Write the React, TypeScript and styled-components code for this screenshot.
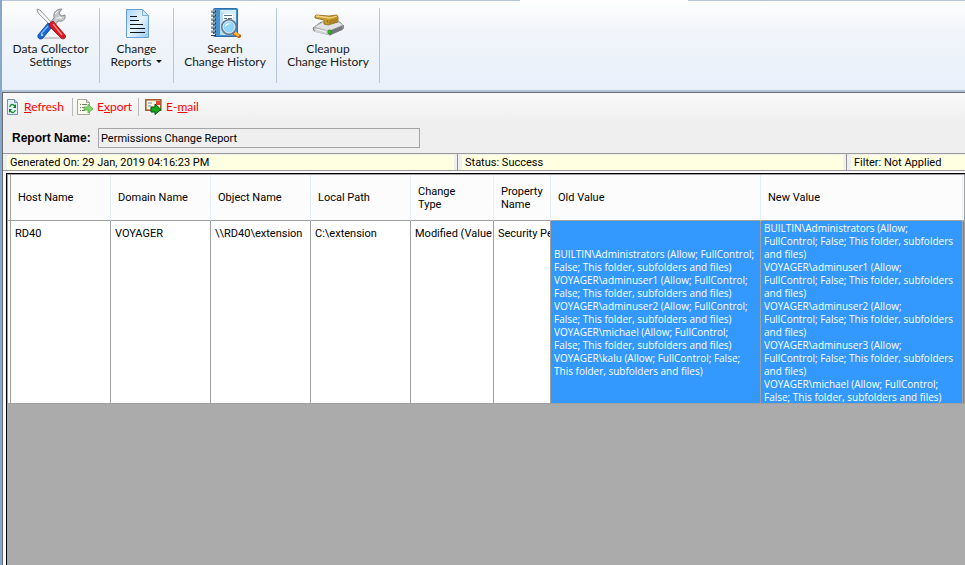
import React from "react";
import styled, { createGlobalStyle } from "styled-components";

const GlobalStyle = createGlobalStyle`
  * { box-sizing: border-box; }
  body {
    margin: 0;
    background: #ababab;
    color: #000;
    font: 11px/13px Roboto, "Liberation Sans", sans-serif;
    overflow: hidden;
  }
  button { font: inherit; color: inherit; border: 0; padding: 0; background: none; cursor: pointer; }
`;

const Window = styled.div`
  display: flex;
  flex-direction: column;
  min-height: 100vh;
  border-left: 2px solid #86a8cc;
`;

const TabEdge = styled.div`
  display: flex;
  height: 1px;
  background: #b6c6dc;
`;

const TabGap = styled.div`
  width: 168px;
  margin-left: 518px;
  background: #fdfdfe;
`;

const Ribbon = styled.nav`
  display: flex;
  height: 91px;
  padding: 7px 0;
  background: linear-gradient(#fefefe, #f1f5fa 35%, #e9f0fa);
  border-bottom: 2px solid #b3c4da;
`;

const RibbonButton = styled.button<{ $width: number }>`
  display: flex;
  flex: none;
  flex-direction: column;
  align-items: center;
  justify-content: flex-start;
  width: ${(p) => p.$width}px;
  border-right: 1px solid #b4c5dc;
  color: #1a1a1a;
  font: 12px/13px Lato, "Open Sans", sans-serif;
  white-space: pre-line;

  svg { display: block; }
`;

const Arrow = styled.span`
  display: inline-block;
  margin: 0 0 3px 5px;
  border: 3px solid transparent;
  border-top-color: #111;
  border-bottom: 0;
`;

const Panel = styled.main`
  display: flex;
  flex: 1;
  flex-direction: column;
  background: #efefef;
  border: solid #6b6b6b;
  border-width: 1px 0 0 1px;
`;

const Toolbar = styled.div`
  display: flex;
  align-items: center;
  height: 28px;
  padding-left: 3px;
  background: linear-gradient(#fafafa, #efefef);
`;

const ToolButton = styled.button<{ $width: number }>`
  display: flex;
  flex: none;
  align-items: center;
  gap: 4px;
  width: ${(p) => p.$width}px;
  color: #f00;
  font: 12px/16px Lato, "Open Sans", sans-serif;
  white-space: nowrap;

  svg { flex: none; }
  u { text-underline-offset: 1px; }
`;

const Divider = styled.span`
  width: 1px;
  height: 18px;
  margin-right: 4px;
  background: #b9b9b9;
`;

const ReportRow = styled.div`
  display: flex;
  align-items: center;
  gap: 8px;
  height: 32px;
  padding: 2px 0 0 9px;
`;

const ReportLabel = styled.label`
  flex: none;
  width: 78px;
  font: bold 12px/14px "Liberation Sans", Arial, sans-serif;
  white-space: nowrap;
`;

const ReportInput = styled.input`
  width: 322px;
  height: 20px;
  padding: 0 2px;
  border: 1px solid #a5a5a5;
  border-radius: 0;
  background: #efefef;
  color: #000;
  font: inherit;
`;

const StatusBar = styled.div`
  display: flex;
  height: 18px;
  border: solid #9a9a9a;
  border-width: 1px 0;
  background: #efefef;
`;

const StatusCell = styled.div<{ $width?: number }>`
  flex: ${(p) => (p.$width ? "none" : "1")};
  ${(p) => (p.$width ? `width: ${p.$width}px; border-right: 1px solid #8f8f8f;` : "")}
  padding: 1px ${(p) => (p.$width ? 3 : 0)}px 0 4px;
  white-space: nowrap;

  & > span { display: block; height: 15px; padding: 1px 3px; background: #ffffe1; }
`;

const GridArea = styled.section`
  display: flex;
  flex: 1;
  padding: 2px 0 0 3px;
  background: #fbfbfb;
`;

const GridFrame = styled.div`
  flex: 1;
  min-width: 0;
  border: solid #000;
  border-width: 1px 0 0 1px;
  background: #ababab;
`;

const Table = styled.table`
  width: 100%;
  table-layout: fixed;
  border-collapse: separate;
  border-spacing: 0;
  border-top: 1px solid #a0a0a0;
  border-left: 1px solid #a0a0a0;
`;

const HeadCell = styled.th<{ $stub?: boolean }>`
  height: 46px;
  padding: ${(p) => (p.$stub ? 0 : "0 2px 0 7px")};
  border-right: 1px solid ${(p) => (p.$stub ? "#a0a0a0" : "#e3edf9")};
  border-bottom: 1px solid #a0a0a0;
  background: #fcfcfc;
  font-weight: normal;
  text-align: left;
  vertical-align: middle;
  white-space: pre-line;
`;

const Cell = styled.td<{ $selected?: boolean; $middle?: boolean }>`
  height: 183px;
  padding: ${(p) => (p.$selected ? "0 0 0 3px" : "6px 0 0 4px")};
  border-right: 1px solid #a0a0a0;
  border-bottom: 1px solid #a0a0a0;
  background: ${(p) => (p.$selected ? "#3399ff" : "#fff")};
  color: ${(p) => (p.$selected ? "#fff" : "#000")};
  vertical-align: ${(p) => (p.$middle ? "middle" : "top")};
  overflow: hidden;
  white-space: nowrap;
`;

const Lines = styled.div`
  max-height: 182px;
  padding-top: 1px;
  overflow: hidden;
  font: 10px/13px "Open Sans", "Liberation Sans", sans-serif;
  white-space: pre;
`;

const ToolsIcon = () => (
  <svg width="32" height="34" viewBox="0 0 32 34" aria-hidden="true">
    <ellipse cx="17" cy="30" rx="11" ry="1" fill="#c6c8ca" />
    <path d="M2 1l3 1 13 14-2 2L3 5z" fill="#eee" stroke="#85898d" strokeWidth=".8" />
    <path d="M4 3l12 13" stroke="#fff" />
    <path d="M14 16l5-6c-1-5 2-9 8-9l-3 4 2 3 4-1c1 5-3 7-7 6l-5 7z" fill="#c4c8cc" stroke="#7d8389" strokeWidth=".9" />
    <path d="M20 6l3-3M21 10l5 0M24 9l3 1" stroke="#f8f8f8" />
    <path d="M13 15l4 4-9 11c-2 2-6 1-5-3z" fill="#1768d5" stroke="#0b3d94" strokeWidth=".8" />
    <path d="M13 18L6 26" stroke="#79b6ff" strokeWidth="1.5" />
    <path d="M14 16l4-3 12 14c2 3-2 5-4 3L15 19z" fill="#d81b22" stroke="#8e0b14" strokeWidth=".8" />
    <path d="M18 16l9 11" stroke="#ff8985" strokeWidth="1.4" />
    <circle cx="7" cy="27" r="1" fill="#d9eaff" />
  </svg>
);

const DocumentIcon = () => (
  <svg width="32" height="34" viewBox="0 0 32 34" aria-hidden="true">
    <defs>
      <linearGradient id="sheet" x2="1" y2="1">
        <stop stopColor="#a9d4fa" /><stop offset=".5" stopColor="#e8f5ff" /><stop offset="1" stopColor="#99c8f4" />
      </linearGradient>
    </defs>
    <path d="M5.500 1.500h16l6 6v22h-22z" fill="url(#sheet)" stroke="#68a1d9" />
    <path d="M21.500 1.500v6h6z" fill="#d3e9fb" stroke="#68a1d9" strokeWidth=".8" />
    <path d="M9 8.500h7M9 12.500h9M9 16.500h13M9 20.500h15M9 24.500h15" stroke="#10151b" />
  </svg>
);

const BookIcon = () => (
  <svg width="32" height="34" viewBox="0 0 32 34" aria-hidden="true">
    <rect x="4.500" y=".5" width="24" height="28" rx="1" fill="#4792cb" stroke="#2c6daa" />
    <path d="M11 2h16v25H11z" fill="#b9dbf3" />
    <path d="M11 2h16v12z" fill="#d8edfb" />
    <path d="M14 6h10v10H14z" fill="#fff" />
    <path d="M15 7.500h8M15 10.500h3m1 0h4M15 13.500h7" stroke="#587185" />
    <path d="M2 3.500h5M2 7.500h5M2 11.500h5M2 15.500h5M2 19.500h5M2 23.500h5M2 27h5" stroke="#303d48" strokeWidth="2" />
    <path d="M2 3h4M2 7h4M2 11h4M2 15h4M2 19h4M2 23h4M2 26.500h4" stroke="#e8edf0" />
    <path d="M25 25l5 3" stroke="#b75a13" strokeWidth="4" strokeLinecap="round" />
    <path d="M26 25l3 2" stroke="#ffb33f" strokeWidth="3" strokeLinecap="round" />
    <circle cx="20" cy="19" r="7" fill="#91d5fa" stroke="#61788b" strokeWidth="2" />
    <circle cx="20" cy="19" r="6" fill="none" stroke="#e2f5ff" />
    <path d="M16 19c0-3 3-5 6-3-3 0-4 1-6 3" fill="#effbff" />
  </svg>
);

const CleanupIcon = () => (
  <svg width="32" height="34" viewBox="0 0 32 34" aria-hidden="true">
    <path d="M1 20l8-6h19l4 4-1 3-13 6-16-4z" fill="#929498" stroke="#6f7175" strokeWidth=".8" />
    <path d="M2 19l9-5h16l4 3-14 6z" fill="#e0e2e4" stroke="#b3b5b9" strokeWidth=".8" />
    <path d="M2 20l15 3v4L3 24z" fill="#d0d2d4" />
    <path d="M17 23l13-5v4l-13 5z" fill="#74777c" />
    <path d="M4 21l10 3" stroke="#f5f5f5" />
    <rect x="16" y="22" width="3" height="4" rx="1" fill="#35c51f" stroke="#167514" strokeWidth=".7" />
    <path d="M3 8l1-1 13 1 8-1 1 2v5l-10 3-4-1v-4L3 10z" fill="#c89b31" stroke="#8b6417" strokeWidth=".8" />
    <path d="M4 8l14 2 7-2" stroke="#f3d682" strokeWidth="1.3" fill="none" />
    <path d="M15 12l1 3m2-3v4m2-5v4m2-4v4m2-5v4" stroke="#8b6415" strokeWidth=".8" fill="none" />
  </svg>
);

const RefreshIcon = () => (
  <svg width="14" height="18" viewBox="0 0 14 18" aria-hidden="true">
    <path d="M1.500 1.500h7l3 3v12h-10z" fill="#e4effb" stroke="#7790b1" />
    <path d="M8.500 1.500v3h3" fill="#b7cce8" stroke="#7790b1" />
    <path d="M4 9V8q2-3 5 0M9 12v1q-2 3-5 0" fill="none" stroke="#168a22" strokeWidth="1.300" />
    <path d="M10 6v4H7zM3 15v-4h3z" fill="#087c15" />
  </svg>
);

const ExportIcon = () => (
  <svg width="16" height="18" viewBox="0 0 16 18" aria-hidden="true">
    <path d="M.5 1.500h9l3 3v12H.5z" fill="#fbfbed" stroke="#a8a799" />
    <path d="M9.500 1.500v3h3" fill="#e0dfcf" stroke="#a8a799" />
    <path d="M3 6.500h1m1 0h5M3 9.500h1m1 0h3M3 12.500h1m1 0h3" stroke="#71796c" />
    <path d="M7 9h4V6l5 5-5 4v-3H7z" fill="#82d566" stroke="#5aad43" strokeWidth=".8" />
  </svg>
);

const MailIcon = () => (
  <svg width="19" height="18" viewBox="0 0 19 18" aria-hidden="true">
    <rect x="2.800" y="1.800" width="15" height="10.400" fill="#fff6df" stroke="#9c5726" strokeWidth="1.500" />
    <path d="M5 5h4M5 8h3" stroke="#638cae" />
    <path d="M13 3h4v4h-4z" fill="#e94435" />
    <path d="M8 9h4V6l6 5.500-6 5V14H8z" fill="#16a71b" stroke="#07530e" />
  </svg>
);

const ribbonItems = [
  { icon: <ToolsIcon />, label: "Data Collector\nSettings", width: 98 },
  { icon: <DocumentIcon />, label: "Change\nReports", width: 74, menu: true },
  { icon: <BookIcon />, label: "Search\nChange History", width: 103 },
  { icon: <CleanupIcon />, label: "Cleanup\nChange History", width: 103 },
];

const columns = [
  { label: "Host Name", width: 100 },
  { label: "Domain Name", width: 100 },
  { label: "Object Name", width: 100 },
  { label: "Local Path", width: 100 },
  { label: "Change\nType", width: 83 },
  { label: "Property\nName", width: 57 },
  { label: "Old Value", width: 210 },
  { label: "New Value", width: 202 },
];

const oldValue = [
  "BUILTIN\\Administrators (Allow; FullControl;",
  "False; This folder, subfolders and files)",
  "VOYAGER\\adminuser1 (Allow; FullControl;",
  "False; This folder, subfolders and files)",
  "VOYAGER\\adminuser2 (Allow; FullControl;",
  "False; This folder, subfolders and files)",
  "VOYAGER\\michael (Allow; FullControl;",
  "False; This folder, subfolders and files)",
  "VOYAGER\\kalu (Allow; FullControl; False;",
  "This folder, subfolders and files)",
].join("\n");

const newValue = [
  ...["BUILTIN\\Administrators", "VOYAGER\\adminuser1", "VOYAGER\\adminuser2", "VOYAGER\\adminuser3"].flatMap(
    (account) => [`${account} (Allow;`, "FullControl; False; This folder, subfolders", "and files)"],
  ),
  "VOYAGER\\michael (Allow; FullControl;",
  "False; This folder, subfolders and files)",
].join("\n");

export default function App() {
  return (
    <>
      <GlobalStyle />
      <Window>
        <TabEdge><TabGap /></TabEdge>
        <Ribbon>
          {ribbonItems.map((item) => (
            <RibbonButton key={item.label} type="button" $width={item.width}>
              {item.icon}
              <span>{item.label}{item.menu && <Arrow />}</span>
            </RibbonButton>
          ))}
        </Ribbon>
        <Panel>
          <Toolbar>
            <ToolButton type="button" $width={66}><RefreshIcon /><span><u>R</u>efresh</span></ToolButton>
            <Divider />
            <ToolButton type="button" $width={61}><ExportIcon /><span>E<u>x</u>port</span></ToolButton>
            <Divider />
            <ToolButton type="button" $width={70}><MailIcon /><span>E-<u>m</u>ail</span></ToolButton>
          </Toolbar>
          <ReportRow>
            <ReportLabel htmlFor="report-name">Report Name:</ReportLabel>
            <ReportInput id="report-name" readOnly value="Permissions Change Report" />
          </ReportRow>
          <StatusBar>
            <StatusCell $width={455}><span>Generated On: 29 Jan, 2019 04:16:23 PM</span></StatusCell>
            <StatusCell $width={389}><span>Status: Success</span></StatusCell>
            <StatusCell><span>Filter: Not Applied</span></StatusCell>
          </StatusBar>
          <GridArea>
            <GridFrame>
              <Table>
                <colgroup>
                  <col width={3} />
                  {columns.map((column) => <col key={column.label} width={column.width} />)}
                  <col />
                </colgroup>
                <thead>
                  <tr>
                    <HeadCell $stub />
                    {columns.map((column) => <HeadCell key={column.label} scope="col">{column.label}</HeadCell>)}
                    <HeadCell $stub />
                  </tr>
                </thead>
                <tbody>
                  <tr>
                    <Cell />
                    <Cell>RD40</Cell>
                    <Cell>VOYAGER</Cell>
                    <Cell>\\RD40\extension</Cell>
                    <Cell>C:\extension</Cell>
                    <Cell>Modified (Value</Cell>
                    <Cell>Security Permissions</Cell>
                    <Cell $selected $middle><Lines>{oldValue}</Lines></Cell>
                    <Cell $selected><Lines>{newValue}</Lines></Cell>
                    <Cell $selected />
                  </tr>
                </tbody>
              </Table>
            </GridFrame>
          </GridArea>
        </Panel>
      </Window>
    </>
  );
}
